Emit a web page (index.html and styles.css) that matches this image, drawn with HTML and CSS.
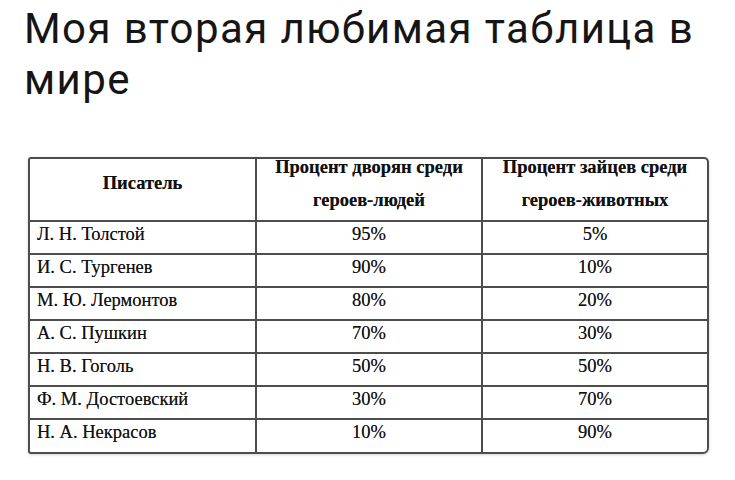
FILE: index.html
```html
<!DOCTYPE html>
<html lang="ru">
<head>
<meta charset="utf-8">
<link rel="stylesheet" href="styles.css">
</head>
<body>
<h1 class="title">Моя вторая любимая таблица в мире</h1>
<div class="sheet">
<table class="grid">
  <colgroup><col class="c1"><col class="c2"><col class="c3"></colgroup>
  <thead>
    <tr>
      <th><div class="hd">Писатель</div></th>
      <th><div class="hd">Процент дворян среди<br>героев-людей</div></th>
      <th><div class="hd">Процент зайцев среди<br>героев-животных</div></th>
    </tr>
  </thead>
  <tbody>
    <tr><td>Л. Н. Толстой</td><td>95%</td><td>5%</td></tr>
    <tr><td>И. С. Тургенев</td><td>90%</td><td>10%</td></tr>
    <tr><td>М. Ю. Лермонтов</td><td>80%</td><td>20%</td></tr>
    <tr><td>А. С. Пушкин</td><td>70%</td><td>30%</td></tr>
    <tr><td>Н. В. Гоголь</td><td>50%</td><td>50%</td></tr>
    <tr><td>Ф. М. Достоевский</td><td>30%</td><td>70%</td></tr>
    <tr><td>Н. А. Некрасов</td><td>10%</td><td>90%</td></tr>
  </tbody>
</table>
</div>
</body>
</html>
```

FILE: styles.css
```css
html, body {
  margin: 0;
  padding: 0;
  background: #ffffff;
}

body {
  width: 735px;
  height: 480px;
  overflow: hidden;
}

.title {
  margin: 3px 0 0 0;
  padding: 0 20px 0 24px;
  font-family: Roboto, "Noto Sans", sans-serif;
  font-weight: 400;
  font-size: 42px;
  line-height: 51px;
  color: #151515;
  letter-spacing: 1.4px;
}

.sheet {
  margin: 52px 0 0 28px;
  width: 677px;
  border: 2px solid #4d4d4d;
  border-radius: 3px 5px 6px 3px;
  box-shadow: 0 1px 3px rgba(0,0,0,0.18);
  overflow: hidden;
}

.grid {
  width: 100%;
  border-collapse: collapse;
  table-layout: fixed;
  font-family: "Liberation Serif", "Times New Roman", serif;
  color: #111111;
  text-shadow: 0 0 0.6px rgba(0,0,0,0.6);
}

.c1 { width: 226px; }
.c2 { width: 226px; }
.c3 { width: auto; }

.grid th {
  box-sizing: border-box;
  height: 62px;
  padding: 0;
  font-size: 18.5px;
  font-weight: 700;
  text-align: center;
  vertical-align: middle;
  border-right: 2px solid #4d4d4d;
  border-bottom: 2px solid #4d4d4d;
}

.hd {
  line-height: 33px;
  margin-top: -12px;
}

.grid td {
  box-sizing: border-box;
  height: 32.7px;
  padding: 0 0 7px 0;
  font-size: 18.5px;
  line-height: 24px;
  text-align: center;
  vertical-align: middle;
  border-right: 2px solid #4d4d4d;
  border-bottom: 2px solid #4d4d4d;
}

.grid td:first-child {
  text-align: left;
  padding-left: 7px;
}

.grid th:last-child,
.grid td:last-child {
  border-right: none;
}

.grid tr:last-child td {
  border-bottom: none;
}
```
